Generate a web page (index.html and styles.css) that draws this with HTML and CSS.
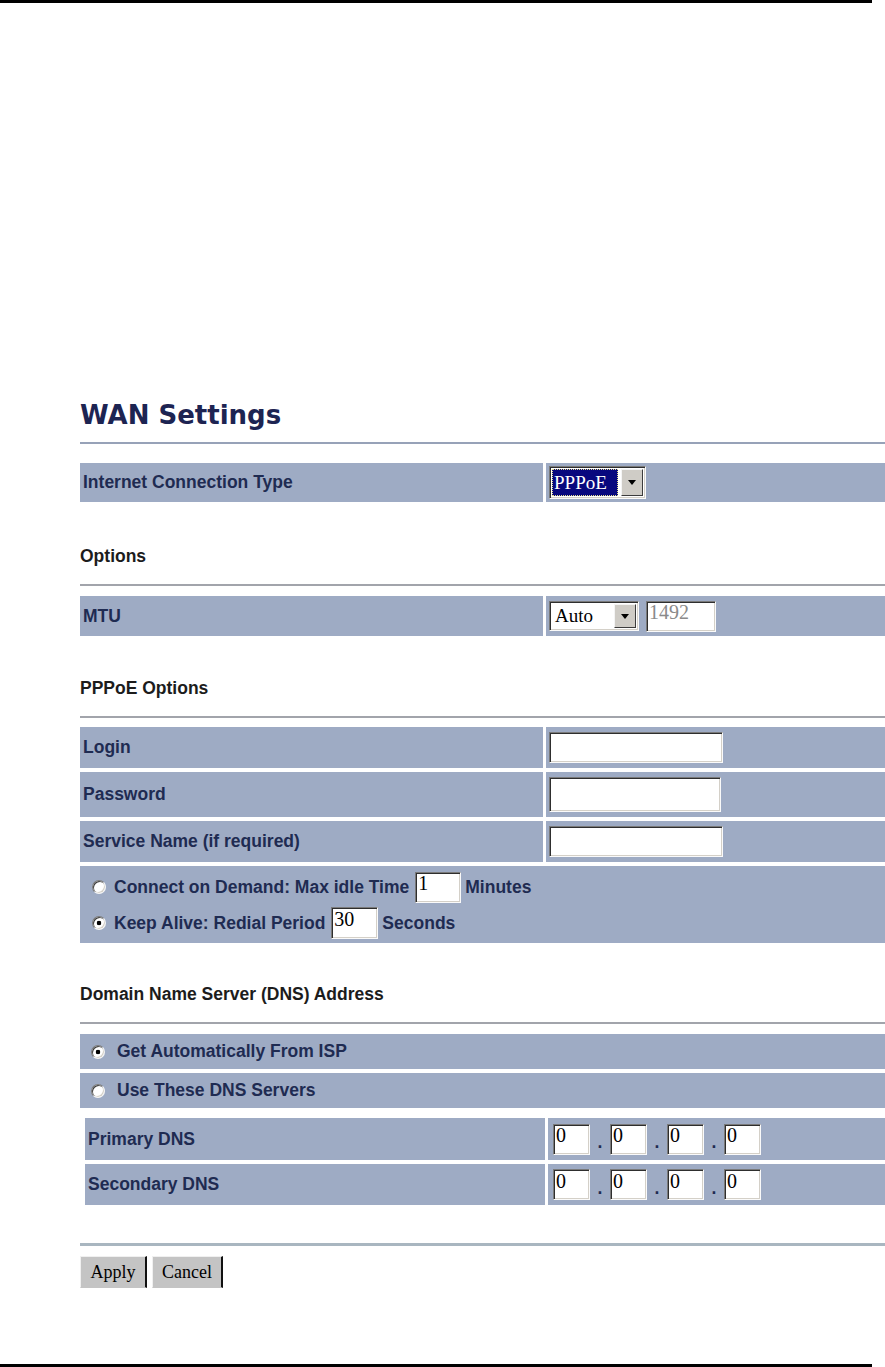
FILE: index.html
```html
<!DOCTYPE html>
<html lang="en">

<head>
  <meta charset="UTF-8">
  <meta name="viewport" content="width=device-width, initial-scale=1.0">
  <title>WAN Settings</title>
  <link rel="stylesheet" href="styles.css">
</head>

<body>
  <div class="page-bar"></div>

  <form class="page">
    <h1 class="title">WAN Settings</h1>
    <hr class="rule rule-title">

    <div class="row row-conn">
      <div class="cell label">Internet Connection Type</div>
      <div class="cell value">
        <span class="combo combo-wide combo-focus">
          <span class="combo-text"><span class="combo-sel">PPPoE</span></span>
          <span class="combo-btn"></span>
        </span>
      </div>
    </div>

    <h2 class="section section-options">Options</h2>
    <hr class="rule">

    <div class="row row-mtu">
      <div class="cell label">MTU</div>
      <div class="cell value">
        <span class="combo">
          <span class="combo-text">Auto</span>
          <span class="combo-btn"></span>
        </span>
        <input class="field field-mtu" type="text" value="1492" disabled>
      </div>
    </div>

    <h2 class="section section-pppoe">PPPoE Options</h2>
    <hr class="rule">

    <div class="table table-pppoe">
      <div class="row row-login">
        <div class="cell label">Login</div>
        <div class="cell value"><input class="field field-text" type="text"></div>
      </div>
      <div class="row row-pass">
        <div class="cell label">Password</div>
        <div class="cell value"><input class="field field-text field-pass" type="password"></div>
      </div>
      <div class="row row-service">
        <div class="cell label">Service Name (if required)</div>
        <div class="cell value"><input class="field field-text" type="text"></div>
      </div>
      <div class="cell span radio-block">
        <label class="radio-line">
          <input class="radio" type="radio" name="mode">
          <span>Connect on Demand: Max idle Time</span>
          <input class="field field-small" type="text" value="1">
          <span>Minutes</span>
        </label>
        <label class="radio-line">
          <input class="radio" type="radio" name="mode" checked>
          <span>Keep Alive: Redial Period</span>
          <input class="field field-small field-secs" type="text" value="30">
          <span>Seconds</span>
        </label>
      </div>
    </div>

    <h2 class="section section-dns">Domain Name Server (DNS) Address</h2>
    <hr class="rule">

    <div class="table table-dns">
      <label class="cell span choice">
        <input class="radio" type="radio" name="dns" checked>
        <span>Get Automatically From ISP</span>
      </label>
      <label class="cell span choice">
        <input class="radio" type="radio" name="dns">
        <span>Use These DNS Servers</span>
      </label>
    </div>

    <div class="table table-servers">
      <div class="row row-dns row-primary">
        <div class="cell label">Primary DNS</div>
        <div class="cell value ip">
          <input class="field field-ip" type="text" value="0"><span class="dot">.</span><input class="field field-ip" type="text" value="0"><span class="dot">.</span><input class="field field-ip" type="text" value="0"><span class="dot">.</span><input class="field field-ip" type="text" value="0">
        </div>
      </div>
      <div class="row row-dns row-secondary">
        <div class="cell label">Secondary DNS</div>
        <div class="cell value ip">
          <input class="field field-ip" type="text" value="0"><span class="dot">.</span><input class="field field-ip" type="text" value="0"><span class="dot">.</span><input class="field field-ip" type="text" value="0"><span class="dot">.</span><input class="field field-ip" type="text" value="0">
        </div>
      </div>
    </div>

    <hr class="rule rule-bottom">

    <div class="actions">
      <button class="btn btn-apply" type="button">Apply</button>
      <button class="btn btn-cancel" type="button">Cancel</button>
    </div>
  </form>

  <div class="page-bar page-bar-bottom"></div>
</body>

</html>
```

FILE: styles.css
```css
body {
  margin: 0;
  height: 1367px;
  display: flex;
  flex-direction: column;
  overflow: hidden;
  background-color: #fff;
  font-family: "Liberation Sans", Arial, sans-serif;
  color: #1f2b52;
}

.page-bar {
  width: 872px;
  height: 3px;
  background-color: #000;
  flex-shrink: 0;
}

.page-bar-bottom {
  margin-top: auto;
}

.page {
  width: 805px;
  margin-left: 80px;
}

.title {
  margin: 397px 0 0;
  font-family: "DejaVu Sans", Verdana, sans-serif;
  font-size: 26px;
  line-height: 30px;
  font-weight: bold;
  color: #1d2452;
}

.rule {
  border: 0;
  height: 2px;
  margin: 18px 0 0;
  background-color: #a2a4ab;
}

.rule-title {
  margin-top: 12px;
  background-color: #97a2b8;
}

.rule-bottom {
  height: 3px;
  margin-top: 38px;
  background-color: #a9b6c0;
}

.section {
  margin: 0;
  font-size: 17.5px;
  line-height: 20px;
  font-weight: bold;
  color: #1c1c1c;
}

.section-options {
  margin-top: 44px;
}

.section-pppoe {
  margin-top: 42px;
}

.section-dns {
  margin-top: 41px;
}

/* table rows */
.table {
  display: flex;
  flex-direction: column;
  gap: 4px;
}

.row {
  display: grid;
  grid-template-columns: 463px 1fr;
  column-gap: 3px;
}

.cell {
  background-color: #9eabc4;
  display: flex;
  align-items: center;
  font-size: 17.5px;
  font-weight: bold;
}

.label {
  padding-left: 3px;
}

.value {
  padding-left: 3px;
  gap: 7px;
}

.row-conn {
  margin-top: 19px;
  height: 39px;
}

.row-mtu {
  margin-top: 10px;
  height: 40px;
}

.table-pppoe {
  margin-top: 9px;
}

.row-login,
.row-service {
  height: 41px;
}

.row-pass {
  height: 45px;
}

.radio-block {
  height: 77px;
  box-sizing: border-box;
  flex-direction: column;
  align-items: flex-start;
  padding: 5px 0 3px 12px;
  gap: 4px;
}

.radio-line {
  display: flex;
  align-items: center;
  height: 32px;
  white-space: nowrap;
}

.radio-line .radio {
  margin-right: 8px;
}

.radio-line .field {
  margin: 0 4px 0 6px;
}

.table-dns {
  margin-top: 10px;
}

.choice {
  height: 35px;
  padding-left: 11px;
}

.choice .radio {
  margin-right: 12px;
}

.table-servers {
  margin-top: 10px;
  margin-left: 5px;
}

.row-dns {
  grid-template-columns: 460px 1fr;
}

.row-primary {
  height: 42px;
}

.row-secondary {
  height: 41px;
}

.ip {
  padding-left: 5px;
  gap: 0;
}

.dot {
  width: 20px;
  height: 31px;
  display: flex;
  align-items: flex-end;
  justify-content: center;
  line-height: 1;
  padding-bottom: 3px;
  box-sizing: border-box;
}

/* classic form controls */
.radio {
  appearance: none;
  width: 14px;
  height: 14px;
  margin: 0;
  border-radius: 50%;
  border: 1px solid;
  border-color: #7c7c7c #f4f4f4 #f4f4f4 #7c7c7c;
  box-shadow: inset 1px 1px 0 #3c3c3c, inset -1px -1px 0 #d4d0c8;
  background-color: #fff;
  flex-shrink: 0;
}

.radio:checked {
  background: radial-gradient(circle, #000 0 2px, #fff 2.6px);
}

.field {
  box-sizing: border-box;
  height: 31px;
  margin: 0;
  padding: 0 2px 7px;
  border: 1px solid;
  border-color: #7a7a7a #fafafa #fafafa #7a7a7a;
  box-shadow: inset 1px 1px 0 #2e2e2e, inset -1px -1px 0 #d4d0c8;
  background-color: #fff;
  font-family: "Liberation Serif", "Times New Roman", serif;
  font-size: 20px;
  line-height: 20px;
  color: #000;
}

.field:disabled {
  color: #8a8a8a;
}

.field-text {
  width: 174px;
}

.field-pass {
  width: 172px;
  height: 35px;
}

.field-mtu {
  width: 70px;
}

.field-small {
  width: 46px;
  font-weight: normal;
}

.field-secs {
  width: 47px;
  height: 32px;
}

.field-ip {
  width: 37px;
}

.combo {
  box-sizing: border-box;
  display: inline-flex;
  width: 90px;
  height: 30px;
  padding: 2px;
  border: 1px solid;
  border-color: #7a7a7a #fafafa #fafafa #7a7a7a;
  box-shadow: inset 1px 1px 0 #2e2e2e, inset -1px -1px 0 #d4d0c8;
  background-color: #fff;
  font-family: "Liberation Serif", "Times New Roman", serif;
  font-size: 19px;
  font-weight: normal;
  color: #000;
}

.combo-wide {
  width: 97px;
  height: 33px;
}

.combo-text {
  flex: 1;
  display: flex;
  align-items: center;
  padding-left: 3px;
}

.combo-focus .combo-text {
  padding: 0;
}

.combo-sel {
  flex: 1;
  align-self: stretch;
  display: flex;
  align-items: center;
  padding-left: 2px;
  background-color: #08087e;
  color: #fff;
  outline: 1px dotted #e6e08a;
  outline-offset: -1px;
}

.combo-btn {
  width: 20px;
  display: flex;
  align-items: center;
  justify-content: center;
  background-color: #cfccc6;
  border: 1px solid;
  border-color: #f4f4f4 #3c3c3c #3c3c3c #f4f4f4;
  margin-left: 3px;
}

.combo-btn::after {
  content: "";
  border-left: 4px solid transparent;
  border-right: 4px solid transparent;
  border-top: 5px solid #000;
}

.actions {
  display: flex;
  gap: 5px;
  margin-top: 10px;
}

.btn {
  height: 32px;
  padding: 0;
  border: 1px solid;
  border-right-width: 2px;
  border-color: #f0f0f0 #111 #c4c4c4 #f0f0f0;
  background-color: #c4c4c4;
  font-family: "Liberation Serif", "Times New Roman", serif;
  font-size: 18px;
  color: #000;
}

.btn-apply {
  width: 67px;
}

.btn-cancel {
  width: 71px;
}
```
